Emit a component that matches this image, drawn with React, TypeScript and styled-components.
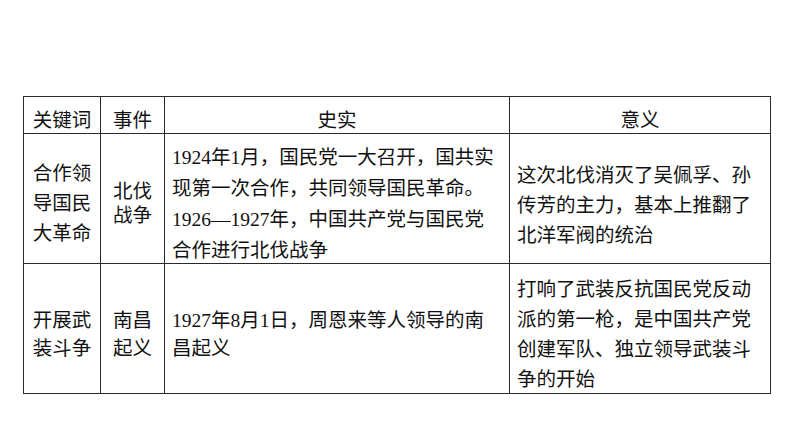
import React from 'react'
import styled, { createGlobalStyle } from 'styled-components'

const GlobalStyle = createGlobalStyle`
  html, body {
    margin: 0;
    padding: 0;
    background: #ffffff;
  }
  body {
    font-family: 'Liberation Serif', 'Noto Sans CJK SC', serif;
    color: #111111;
  }
`

const Page = styled.div`
  width: 794px;
  height: 447px;
  padding: 96px 0 0 23px;
  box-sizing: border-box;
`

const Grid = styled.div`
  display: grid;
  grid-template-columns: 77px 64px 345px 261px;
  grid-template-rows: 37px 130px 130px;
  width: max-content;
  border-top: 1px solid #2a2a2a;
  border-left: 1px solid #2a2a2a;
`

type CellProps = { $align?: 'center' | 'left'; $shift?: number; $lh?: number }

const Cell = styled.div<CellProps>`
  box-sizing: border-box;
  border-right: 1px solid #2a2a2a;
  border-bottom: 1px solid #2a2a2a;
  display: flex;
  flex-direction: column;
  justify-content: center;
  align-items: ${(p) => (p.$align === 'left' ? 'flex-start' : 'center')};
  text-align: ${(p) => (p.$align === 'left' ? 'left' : 'center')};
  padding: ${(p) => p.$shift ?? 0}px ${(p) => (p.$align === 'left' ? '7px' : '0')} 0;
  font-size: 19.5px;
  line-height: ${(p) => p.$lh ?? 30}px;
  white-space: nowrap;
  overflow: visible;
`

const Line = styled.span`
  display: block;
`

const rows = [
  {
    key: ['合作领', '导国民', '大革命'],
    event: ['北伐', '战争'],
    eventLh: 24,
    facts: [
      '1924年1月，国民党一大召开，国共实',
      '现第一次合作，共同领导国民革命。',
      '1926—1927年，中国共产党与国民党',
      '合作进行北伐战争',
    ],
    meaning: ['这次北伐消灭了吴佩孚、孙', '传芳的主力，基本上推翻了', '北洋军阀的统治'],
    shift: 10,
    meaningShift: 15,
  },
  {
    key: ['开展武', '装斗争'],
    event: ['南昌', '起义'],
    eventLh: 28,
    facts: ['1927年8月1日，周恩来等人领导的南', '昌起义'],
    meaning: [
      '打响了武装反抗国民党反动',
      '派的第一枪，是中国共产党',
      '创建军队、独立领导武装斗',
      '争的开始',
    ],
    shift: 12,
    meaningShift: 13,
  },
]

export default function App() {
  return (
    <>
      <GlobalStyle />
      <Page>
        <Grid>
          <Cell $shift={12}>关键词</Cell>
          <Cell $shift={12}>事件</Cell>
          <Cell $shift={12}>史实</Cell>
          <Cell $shift={12}>意义</Cell>
          {rows.map((r, i) => (
            <React.Fragment key={i}>
              <Cell $shift={r.shift} $lh={i === 1 ? 28 : 30}>
                {r.key.map((t) => (
                  <Line key={t}>{t}</Line>
                ))}
              </Cell>
              <Cell $shift={r.shift} $lh={r.eventLh}>
                {r.event.map((t) => (
                  <Line key={t}>{t}</Line>
                ))}
              </Cell>
              <Cell $align='left' $shift={r.shift} $lh={i === 1 ? 28 : 31}>
                {r.facts.map((t) => (
                  <Line key={t}>{t}</Line>
                ))}
              </Cell>
              <Cell $align='left' $shift={r.meaningShift}>
                {r.meaning.map((t) => (
                  <Line key={t}>{t}</Line>
                ))}
              </Cell>
            </React.Fragment>
          ))}
        </Grid>
      </Page>
    </>
  )
}
